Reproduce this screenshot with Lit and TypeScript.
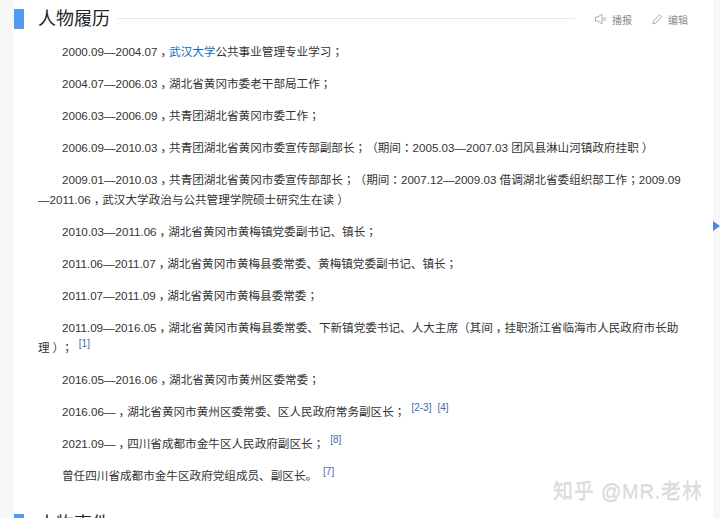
import { LitElement, html, css } from "lit";
import { customElement } from "lit/decorators.js";

type Para = { before?: string; link?: string; t: string; refs?: string[] };

const paras: Para[] = [
  { before: "2000.09—2004.07，", link: "武汉大学", t: "公共事业管理专业学习；" },
  { t: "2004.07—2006.03，湖北省黄冈市委老干部局工作；" },
  { t: "2006.03—2006.09，共青团湖北省黄冈市委工作；" },
  { t: "2006.09—2010.03，共青团湖北省黄冈市委宣传部副部长；（期间：2005.03—2007.03 团风县淋山河镇政府挂职）" },
  { t: "2009.01—2010.03，共青团湖北省黄冈市委宣传部部长；（期间：2007.12—2009.03 借调湖北省委组织部工作；2009.09—2011.06，武汉大学政治与公共管理学院硕士研究生在读）" },
  { t: "2010.03—2011.06，湖北省黄冈市黄梅镇党委副书记、镇长；" },
  { t: "2011.06—2011.07，湖北省黄冈市黄梅县委常委、黄梅镇党委副书记、镇长；" },
  { t: "2011.07—2011.09，湖北省黄冈市黄梅县委常委；" },
  { t: "2011.09—2016.05，湖北省黄冈市黄梅县委常委、下新镇党委书记、人大主席（其间，挂职浙江省临海市人民政府市长助理）；", refs: ["[1]"] },
  { t: "2016.05—2016.06，湖北省黄冈市黄州区委常委；" },
  { t: "2016.06—，湖北省黄冈市黄州区委常委、区人民政府常务副区长；", refs: ["[2-3]", "[4]"] },
  { t: "2021.09—，四川省成都市金牛区人民政府副区长；", refs: ["[8]"] },
  { t: "曾任四川省成都市金牛区政府党组成员、副区长。", refs: ["[7]"] },
];

/* The reference sets ；： in the middle of their cell (the TC form of the glyph),
   and nudges ，） to the right within their cell. */
const punct = (s: string) =>
  s.split(/([，；：）])/).map((part) => {
    if (part === "，") return html`<span class="comma">${part}</span>`;
    if (part === "）") return html`<span class="close">${part}</span>`;
    if (part === "；" || part === "：") return html`<span class="pc">${part}</span>`;
    return part;
  });

@customElement("app-root")
export class AppRoot extends LitElement {
  static styles = css`
    :host {
      display: block;
      width: 720px;
      height: 518px;
      overflow: hidden;
      background: #f7f7f7;
      font-family: "Liberation Sans", "Noto Sans CJK SC", sans-serif;
      color: #333;
    }
    .wrap {
      position: relative;
      width: 720px;
      height: 518px;
    }
    .page {
      box-sizing: border-box;
      margin-left: 14px;
      width: 699px;
      height: 518px;
      background: #fff;
      padding-top: 9px;
      overflow: hidden;
    }
    .head {
      display: flex;
      align-items: center;
      height: 20px;
    }
    .bar {
      width: 10px;
      height: 20px;
      background: #4f9cee;
      flex: none;
    }
    .title {
      margin-left: 14px;
      font-size: 18px;
      line-height: 20px;
      color: #222;
      flex: none;
    }
    .rule {
      flex: 1;
      height: 1px;
      background: #e8e8e8;
      margin: 0 0 2px 8px;
    }
    .tools {
      flex: none;
      display: flex;
      align-items: center;
      gap: 20px;
      margin: 0 25px 0 20px;
      font-size: 10px;
      color: #888;
    }
    .tool {
      display: flex;
      align-items: center;
      gap: 5px;
    }
    .tool svg {
      display: block;
    }
    .body {
      padding: 13px 24px 0;
      font-size: 11.6px;
      line-height: 20px;
      color: #333;
      text-spacing-trim: space-all;
    }
    .body p {
      margin: 0 0 12px;
      text-indent: 24px;
    }
    .pc {
      font-family: "Noto Sans CJK TC", sans-serif;
      line-height: 0;
    }
    .comma {
      position: relative;
      left: 3px;
    }
    .close {
      position: relative;
      left: 3px;
    }
    .link {
      color: #136ec2;
    }
    .ref {
      position: relative;
      top: -5px;
      margin-left: 6px;
      font-size: 10px;
      line-height: 0;
      color: #3f68ad;
    }
    .next {
      display: flex;
      align-items: center;
      height: 20px;
      margin-top: 28px;
    }
    .gutter-arrow {
      position: absolute;
      left: 713px;
      top: 221px;
      width: 0;
      height: 0;
      border-left: 7px solid #4f86dc;
      border-top: 5px solid transparent;
      border-bottom: 5px solid transparent;
    }
    .mark {
      position: absolute;
      left: 553px;
      top: 479px;
      font-size: 20px;
      line-height: 24px;
      letter-spacing: 0.8px;
      color: #dedede;
      text-shadow: 0 1px 0 #8a8a8a55;
      white-space: nowrap;
    }
  `;

  render() {
    return html`
      <div class="wrap">
        <div class="page">
          <div class="head">
            <div class="bar"></div>
            <div class="title">人物履历</div>
            <div class="rule"></div>
            <div class="tools">
              <span class="tool">
                <svg width="12" height="12" viewBox="0 0 12 12" fill="none" stroke="#aaa" stroke-width="1">
                  <path d="M.5 4h2.5l4-3v10l-4-3H.5z" />
                  <path d="M9 4v4" />
                  <path d="M11 4v4" stroke="#ccc" />
                </svg>
                播报
              </span>
              <span class="tool">
                <svg width="11" height="12" viewBox="0 0 11 12" fill="none" stroke="#aaa" stroke-width="1">
                  <path d="M.8 11l.7-3 6-6.2 2.2 2.1-6 6.2z" />
                </svg>
                编辑
              </span>
            </div>
          </div>
          <div class="body">
            ${paras.map(
              (p) => html`<p>${p.before ? punct(p.before) : ""}${p.link ? html`<a class="link">${p.link}</a>` : ""}${punct(p.t)}${(p.refs ?? []).map((r) => html`<span class="ref">${r}</span>`)}</p>`
            )}
          </div>
          <div class="next">
            <div class="bar"></div>
            <div class="title">人物事件</div>
          </div>
        </div>
        <div class="gutter-arrow"></div>
        <div class="mark">知乎 @MR.老林</div>
      </div>
    `;
  }
}
